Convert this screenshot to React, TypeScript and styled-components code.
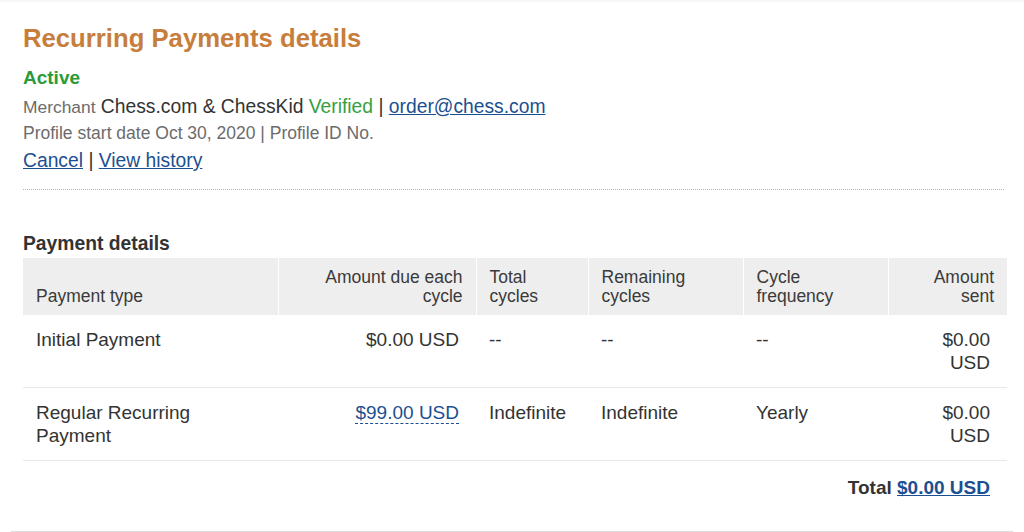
import * as React from 'react';
import styled, { createGlobalStyle } from 'styled-components';

const GlobalStyle = createGlobalStyle`
  html, body {
    margin: 0;
    padding: 0;
    background: #fff;
  }
  body {
    font-family: "Liberation Sans", Arial, Helvetica, sans-serif;
    color: #333;
  }
`;

const TopShade = styled.div`
  height: 3px;
  background: linear-gradient(#f2f2f2, #fff);
`;

const Card = styled.div`
  margin: 0 11px;
  padding: 20px 6px 20px 12px;
  border-bottom: 1px solid #dedede;
`;

const Title = styled.h1`
  margin: 0;
  font-size: 25.7px;
  line-height: 30px;
  font-weight: bold;
  color: #c77e3c;
`;

const Status = styled.div`
  margin-top: 13px;
  font-size: 19px;
  line-height: 24px;
  font-weight: bold;
  color: #2b9a38;
`;

const InfoLine = styled.div<{ $gap: number; $size: number; $lh: number }>`
  margin-top: ${({ $gap }) => $gap}px;
  font-size: ${({ $size }) => $size}px;
  line-height: ${({ $lh }) => $lh}px;
  color: #333;
`;

const Label = styled.span`
  font-size: 17.4px;
  color: #6c6c6c;
`;

const Muted = styled.span`
  color: #6c6c6c;
`;

const Verified = styled.span`
  color: #36a03e;
`;

const Link = styled.a`
  color: #1c4f91;
  text-decoration: underline;
  cursor: pointer;
`;

const Divider = styled.div`
  margin-top: 16px;
  margin-right: 3px;
  border-top: 1px dotted #b5b5b5;
`;

const SectionTitle = styled.h2`
  margin: 42px 0 0;
  font-size: 19.3px;
  line-height: 24px;
  font-weight: bold;
  color: #333;
`;

const Table = styled.table`
  margin-top: 2px;
  width: 984px;
  border-collapse: collapse;
  table-layout: fixed;
`;

const Th = styled.th<{ $align?: 'left' | 'right' }>`
  padding: 10px 13px 9px 13px;
  background: #eeeeee;
  border-right: 1px solid #fff;
  font-size: 17.5px;
  line-height: 19px;
  font-weight: normal;
  color: #3a3a3a;
  vertical-align: bottom;
  text-align: ${({ $align }) => $align || 'left'};

  &:last-child {
    border-right: none;
  }
`;

const Row = styled.tr`
  border-bottom: 1px solid #e8e8e8;
`;

const Td = styled.td<{ $align?: 'left' | 'right' }>`
  padding: 13px 17px 13px 13px;
  font-size: 19px;
  line-height: 23px;
  color: #333;
  vertical-align: top;
  text-align: ${({ $align }) => $align || 'left'};
`;

const DueAmount = styled.span`
  color: #1c4f91;
  border-bottom: 1px dashed #1c4f91;
  cursor: pointer;
`;

const TotalCell = styled.td`
  padding: 15px 17px 12px 13px;
  font-size: 19px;
  line-height: 23px;
  font-weight: bold;
  text-align: right;
  color: #333;
`;

interface IPaymentRow {
  type: string;
  due: string;
  dueLink?: boolean;
  total: string;
  remaining: string;
  frequency: string;
  sent: string;
}

const rows: IPaymentRow[] = [
  { type: 'Initial Payment', due: '$0.00 USD', total: '--', remaining: '--', frequency: '--', sent: '$0.00 USD' },
  {
    type: 'Regular Recurring Payment',
    due: '$99.00 USD',
    dueLink: true,
    total: 'Indefinite',
    remaining: 'Indefinite',
    frequency: 'Yearly',
    sent: '$0.00 USD'
  }
];

const App: React.FunctionComponent = () => {
  return (
    <>
      <GlobalStyle />
      <TopShade />
      <Card>
        <Title>Recurring Payments details</Title>
        <Status>Active</Status>
        <InfoLine $gap={5} $size={19.3} $lh={24}>
          <Label>Merchant</Label> Chess.com &amp; ChessKid <Verified>Verified</Verified> | <Link>order@chess.com</Link>
        </InfoLine>
        <InfoLine $gap={3} $size={17.5} $lh={22}>
          <Muted>Profile start date Oct 30, 2020 | Profile ID No.</Muted>
        </InfoLine>
        <InfoLine $gap={5} $size={19.3} $lh={24}>
          <Link>Cancel</Link> | <Link>View history</Link>
        </InfoLine>
        <Divider />

        <SectionTitle>Payment details</SectionTitle>
        <Table>
          <colgroup>
            <col style={{ width: 255 }} />
            <col style={{ width: 198 }} />
            <col style={{ width: 112 }} />
            <col style={{ width: 155 }} />
            <col style={{ width: 145 }} />
            <col style={{ width: 119 }} />
          </colgroup>
          <thead>
            <tr>
              <Th>Payment type</Th>
              <Th $align="right">Amount due each<br />cycle</Th>
              <Th>Total<br />cycles</Th>
              <Th>Remaining<br />cycles</Th>
              <Th>Cycle<br />frequency</Th>
              <Th $align="right">Amount<br />sent</Th>
            </tr>
          </thead>
          <tbody>
            {rows.map(row => (
              <Row key={row.type}>
                <Td>{row.type}</Td>
                <Td $align="right">{row.dueLink ? <DueAmount>{row.due}</DueAmount> : row.due}</Td>
                <Td>{row.total}</Td>
                <Td>{row.remaining}</Td>
                <Td>{row.frequency}</Td>
                <Td $align="right">{row.sent}</Td>
              </Row>
            ))}
          </tbody>
          <tfoot>
            <tr>
              <TotalCell colSpan={6}>
                Total <Link>$0.00 USD</Link>
              </TotalCell>
            </tr>
          </tfoot>
        </Table>
      </Card>
    </>
  );
};

export default App;
